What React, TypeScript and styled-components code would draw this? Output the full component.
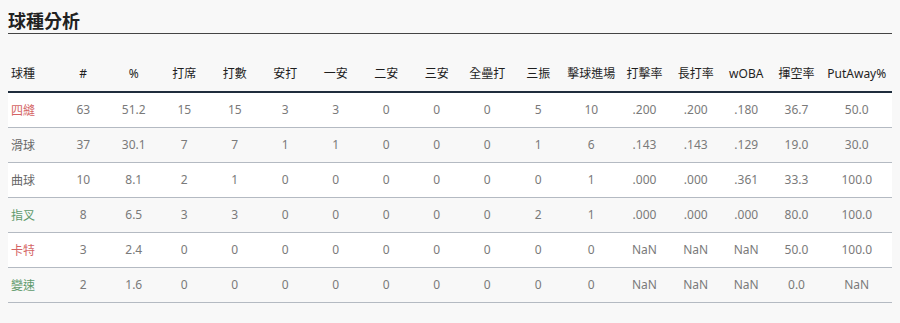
import React from 'react';
import styled, {createGlobalStyle} from 'styled-components';

const GlobalStyle = createGlobalStyle`
    body {
        margin: 0;
        background: #f8f8f8;
        font-family: "Noto Sans", "Noto Sans CJK TC", sans-serif;
    }
`;

const Page = styled.div`
    padding: 8px 8px 8px;
`;

const Title = styled.h2`
    margin: 0;
    font-family: "Noto Sans CJK TC", sans-serif;
    font-size: 18px;
    line-height: 25px;
    font-weight: bold;
    color: #222;
    border-bottom: 1px solid #444;
`;

const Table = styled.table`
    width: 100%;
    margin-top: 23px;
    border-collapse: collapse;
    table-layout: fixed;
    font-size: 12px;
`;

const Col = styled.col<{$w: number}>`
    width: ${(p) => p.$w}px;
`;

const HeadCell = styled.th<{$left?: boolean}>`
    padding: 8px 0;
    line-height: 18px;
    font-weight: 400;
    color: #1e1e1e;
    text-align: ${(p) => (p.$left ? 'left' : 'center')};
    padding-left: ${(p) => (p.$left ? '3px' : '0')};
    border-bottom: 2px solid #1f2d3d;
    white-space: nowrap;
`;

const Row = styled.tr`
    background: #f8f8f8;
    &:nth-child(odd) {
        background: #fff;
    }
`;

const Cell = styled.td`
    padding: 8px 0;
    line-height: 18px;
    color: #7a7a7a;
    text-align: center;
    border-bottom: 1px solid #b4bac2;
    white-space: nowrap;
`;

const PitchCell = styled(Cell)<{$tone: string}>`
    text-align: left;
    padding-left: 3px;
    font-family: "Noto Sans CJK TC", sans-serif;
    color: ${(p) => p.$tone};
`;

const RED = '#d46464';
const GREEN = '#5f9a6c';
const PLAIN = '#666';

const headers = ['球種', '#', '%', '打席', '打數', '安打', '一安', '二安', '三安', '全壘打', '三振', '擊球進場', '打擊率', '長打率', 'wOBA', '揮空率', 'PutAway%'];
const widths = [50, 50.5, 50.5, 50.5, 50.5, 50.5, 50.5, 50.5, 50.5, 50.5, 51.5, 54.5, 52, 50.5, 50.5, 50, 70.5];

const rows: {name: string; tone: string; values: string[]}[] = [
    {name: '四縫', tone: RED, values: ['63', '51.2', '15', '15', '3', '3', '0', '0', '0', '5', '10', '.200', '.200', '.180', '36.7', '50.0']},
    {name: '滑球', tone: PLAIN, values: ['37', '30.1', '7', '7', '1', '1', '0', '0', '0', '1', '6', '.143', '.143', '.129', '19.0', '30.0']},
    {name: '曲球', tone: PLAIN, values: ['10', '8.1', '2', '1', '0', '0', '0', '0', '0', '0', '1', '.000', '.000', '.361', '33.3', '100.0']},
    {name: '指叉', tone: GREEN, values: ['8', '6.5', '3', '3', '0', '0', '0', '0', '0', '2', '1', '.000', '.000', '.000', '80.0', '100.0']},
    {name: '卡特', tone: RED, values: ['3', '2.4', '0', '0', '0', '0', '0', '0', '0', '0', '0', 'NaN', 'NaN', 'NaN', '50.0', '100.0']},
    {name: '變速', tone: GREEN, values: ['2', '1.6', '0', '0', '0', '0', '0', '0', '0', '0', '0', 'NaN', 'NaN', 'NaN', '0.0', 'NaN']},
];

const App = () => {
    return (
        <Page>
            <GlobalStyle />
            <Title>球種分析</Title>
            <Table>
                <colgroup>
                    {widths.map((w, i) => <Col key={i} $w={w} />)}
                </colgroup>
                <thead>
                    <tr>
                        {headers.map((h, i) => (
                            <HeadCell key={h} $left={i === 0}>{h}</HeadCell>
                        ))}
                    </tr>
                </thead>
                <tbody>
                    {rows.map((r) => (
                        <Row key={r.name}>
                            <PitchCell $tone={r.tone}>{r.name}</PitchCell>
                            {r.values.map((v, i) => <Cell key={i}>{v}</Cell>)}
                        </Row>
                    ))}
                </tbody>
            </Table>
        </Page>
    );
}

export default App;
